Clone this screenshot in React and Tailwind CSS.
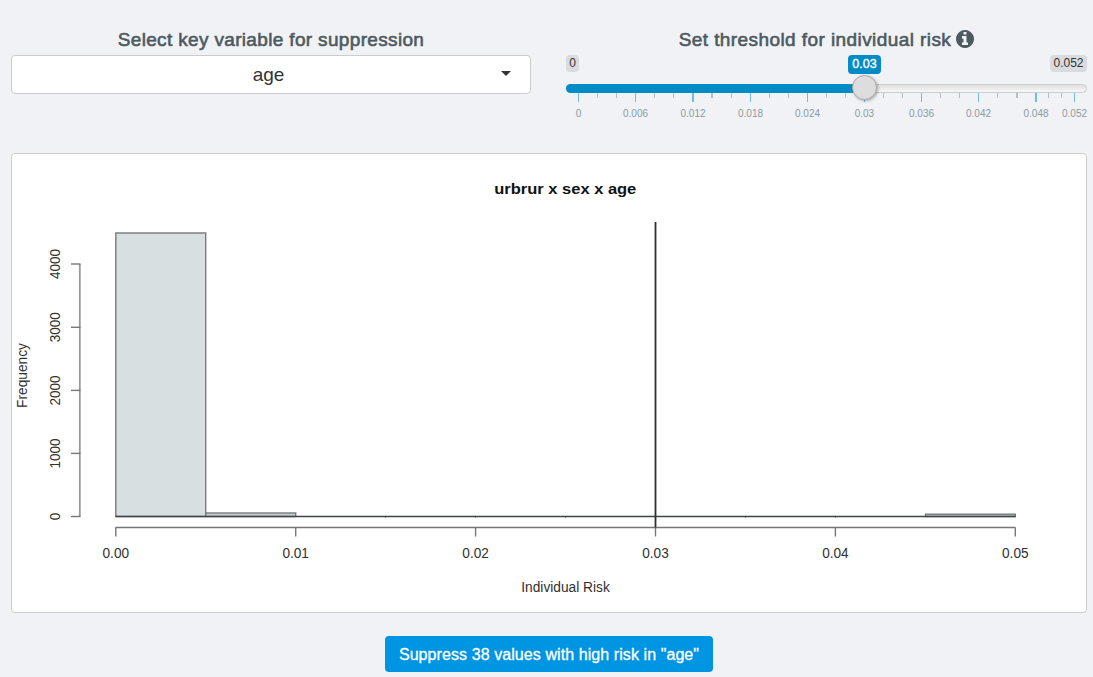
import React from "react";

const majors = [
  [578.5, "0"], [635.5, "0.006"], [693, "0.012"], [750.5, "0.018"], [807.5, "0.024"],
  [864.5, "0.03"], [921.5, "0.036"], [978.5, "0.042"], [1036, "0.048"], [1074.5, "0.052"],
];

const minors = [
  597.5, 616.5, 654.5, 673.5, 712, 731.5, 769.5, 788.5, 826.5, 845.5,
  883.5, 902.5, 940.5, 959.5, 997.5, 1017, 1048.5, 1061.5,
];

const yTicks = [[516.5, "0"], [453.4, "1000"], [390.4, "2000"], [327.3, "3000"], [264, "4000"]];
const xTicks = [
  [115.8, "0.00"], [295.7, "0.01"], [475.6, "0.02"],
  [655.5, "0.03"], [835.4, "0.04"], [1015.3, "0.05"],
];

function SliderScale() {
  return (
    <svg className="block h-[28px] w-[521px]" viewBox="566 93 521 28">
      {minors.map((x) => (
        <line key={x} x1={x} x2={x} y1="93" y2="98" stroke="#b9bcc0" strokeWidth={Number.isInteger(x) ? 2 : 1} />
      ))}
      {majors.map(([x, label]) => (
        <g key={label}>
          <line x1={x} x2={x} y1="93" y2="102" stroke="#72bcdc" strokeWidth={Number.isInteger(x) ? 2 : 1} />
          <text
            x={x} y="117" textAnchor="middle" fontSize="10" fill="#8b9a9f"
            textLength={label.length === 5 ? 25 : label.length === 4 ? 19.3 : undefined}
          >
            {label}
          </text>
        </g>
      ))}
    </svg>
  );
}

function ThresholdSlider() {
  return (
    <div className="relative">
      <div className="flex h-[29px] items-start justify-between text-[12px] leading-[16px] text-[#333]">
        <span className="h-[17px] w-[13px] rounded bg-[#dadbdf] text-center">0</span>
        <span className="h-[17px] w-[37px] rounded bg-[#dadbdf] text-center">0.052</span>
      </div>
      <div className="flex h-[9px] rounded-[5px] border border-[#cccccc] bg-linear-to-b from-[#dedede] to-[#f8f8f8]">
        <div className="-my-px -ml-px h-[9px] w-[299px] rounded-l-[5px] bg-[#028cc6]" />
      </div>
      <SliderScale />
      <span className="absolute top-0 left-[282px] h-[19px] w-[33px] rounded bg-[#028cc6] text-center text-[12.500px] leading-[19px] text-white [-webkit-text-stroke:0.35px_white]">
        0.03
      </span>
      <span className="absolute top-[20px] left-[286px] size-[25px] rounded-full border border-[#aaaaaa] bg-[#dddddd] shadow-[1px_1px_3px_rgba(0,0,0,0.3)]" />
    </div>
  );
}

function InfoIcon() {
  return (
    <svg className="mt-px size-[18px]" viewBox="0 0 1536 1536" fill="#4d5a60">
      <path d="M1024 1248v-160q0-14-9-23t-23-9h-96V544q0-14-9-23t-23-9H544q-14 0-23 9t-9 23v160q0 14 9 23t23 9h96v320h-96q-14 0-23 9t-9 23v160q0 14 9 23t23 9h448q14 0 23-9t9-23zM896 352V192q0-14-9-23t-23-9H672q-14 0-23 9t-9 23v160q0 14 9 23t23 9h192q14 0 23-9t9-23zm640 416q0 209-103 385.500T1153.500 1433 768 1536t-385.500-103T103 1153.500 0 768t103-385.500T382.500 103 768 0t385.500 103T1433 382.500 1536 768z" />
    </svg>
  );
}

function Histogram() {
  return (
    <svg className="block h-[458px] w-[1074px]" viewBox="12 154 1074 458" fontSize="14" fill="#303030">
      <text x="565.3" y="194" textAnchor="middle" fontSize="15.500" fontWeight="bold" fill="#111" textLength="142" lengthAdjust="spacingAndGlyphs">
        urbrur x sex x age
      </text>
      <g fill="none" stroke="#777" strokeWidth="1.4">
        <path d="M79.800 264V516.500" stroke="#999" strokeWidth="1.8" />
        {yTicks.map(([y]) => <path key={y} d={`M71 ${y}H80.500`} />)}
        <path d="M115.500 527.500H1015.500" />
        {xTicks.map(([x]) => <path key={x} d={`M${x} 527.500V536.500`} />)}
      </g>
      <g fill="#d8dfe0" stroke="#767a7b" strokeWidth="1.4">
        <rect x="115.800" y="233" width="89.900" height="283.500" />
        <rect x="205.700" y="513" width="90" height="3.500" fill="#c9cfd0" />
        <rect x="925.500" y="514.200" width="89.800" height="2.300" fill="#c9cfd0" />
      </g>
      <path d="M115.500 516.500H1015.500" stroke="#414444" strokeWidth="1.300" />
      <path d="M385.500 516v1.500M475.500 516v1.500M565.500 516v1.500M745.500 516v1.500M835.500 516v1.500" stroke="#333" />
      <path d="M655.500 222V527.500" stroke="#303030" strokeWidth="1.800" />
      {yTicks.map(([y, label]) => (
        <text
          key={label} transform={`translate(60 ${y}) rotate(-90)`} textAnchor="middle"
          textLength={label.length > 1 ? 30 : 7.5} lengthAdjust="spacingAndGlyphs"
        >
          {label}
        </text>
      ))}
      <text transform="translate(27 375.500) rotate(-90)" textAnchor="middle" textLength="65" lengthAdjust="spacingAndGlyphs">
        Frequency
      </text>
      {xTicks.map(([x, label]) => (
        <text key={label} x={x} y="558" textAnchor="middle" textLength="26.500" lengthAdjust="spacingAndGlyphs">
          {label}
        </text>
      ))}
      <text x="565.500" y="591.500" textAnchor="middle" textLength="88.500" lengthAdjust="spacingAndGlyphs">
        Individual Risk
      </text>
    </svg>
  );
}

export default function App() {
  return (
    <main className="flex h-[677px] w-[1093px] flex-col overflow-hidden bg-[#f1f2f6] pt-[27px] pr-[6px] pl-[11px] font-['Liberation_Sans',Arial,sans-serif]">
      <div className="flex h-[126px] gap-[35px]">
        <section className="w-[520px]">
          <h2 className="h-[28px] text-center text-[19px] leading-[25px] tracking-[0.34px] whitespace-nowrap text-[#4d5a60] [-webkit-text-stroke:0.6px_#4d5a60]">
            Select key variable for suppression
          </h2>
          <button className="flex h-[39px] w-full items-center rounded-[4px] border border-[#cccccc] bg-white pr-[19px] pl-[24px] text-[19px] text-[#333]">
            <span className="flex-1 text-center leading-[24px]">age</span>
            <svg className="mb-[2px] h-[5px] w-[10px]" viewBox="0 0 10 5" fill="#333">
              <path d="M0 0h10L5 5z" />
            </svg>
          </button>
        </section>
        <section className="w-[521px]">
          <h2 className="flex h-[28px] items-start justify-center gap-[5px] text-[19px] leading-[25px] whitespace-nowrap text-[#4d5a60]">
            <span className="tracking-[0.42px] [-webkit-text-stroke:0.6px_#4d5a60]">Set threshold for individual risk</span>
            <span className="pt-[2px]"><InfoIcon /></span>
          </h2>
          <ThresholdSlider />
        </section>
      </div>
      <div className="h-[460px] w-[1076px] shrink-0 rounded-[4px] border border-[#cccccc] bg-white">
        <Histogram />
      </div>
      <div className="flex justify-center pt-[23px]">
        <button className="h-[36px] w-[328px] rounded-[4px] bg-[#0095e2] pt-px text-[16px] tracking-[0.08px] whitespace-nowrap text-white [-webkit-text-stroke:0.3px_white]">
          Suppress 38 values with high risk in "age"
        </button>
      </div>
    </main>
  );
}
